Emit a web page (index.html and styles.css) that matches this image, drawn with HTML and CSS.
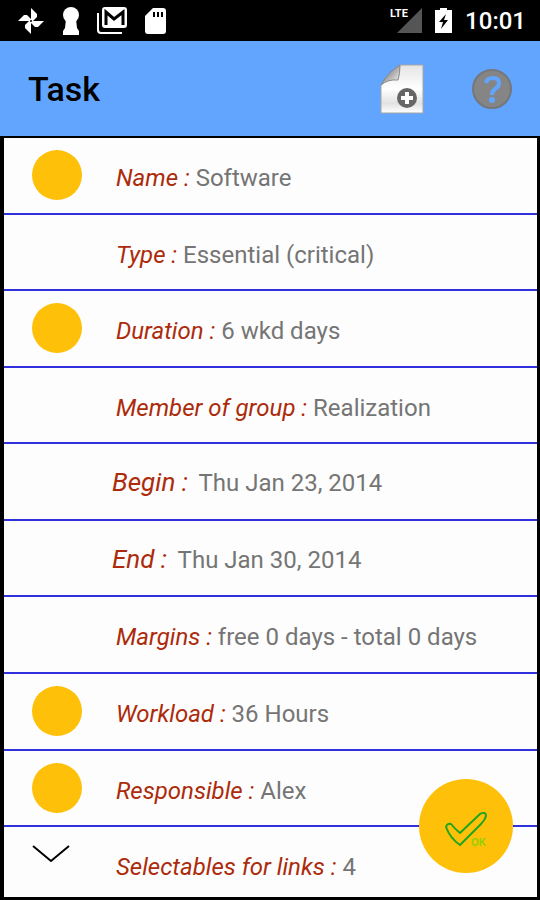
FILE: index.html
```html
<!DOCTYPE html>
<html lang="en">
<head>
   <meta charset="UTF-8">
   <meta name="viewport" content="width=device-width, initial-scale=1.0">
   <title>Task</title>
   <link rel="stylesheet" href="styles.css">
</head>
<body>
   <div class="statusbar">
      <div class="notifications">
         <svg width="28" height="28" viewBox="0 0 28 28" fill="#fff">
            <path d="M14 1 L20 7 V10 L16 14 H14 Z"/>
            <path d="M27 14 L21 20 H18 L14 16 V14 Z"/>
            <path d="M14 27 L8 21 V18 L12 14 H14 Z"/>
            <path d="M1 14 L7 8 H10 L14 12 V14 Z"/>
            <circle cx="14" cy="14" r="1" fill="#000"/>
         </svg>
         <svg width="16" height="28" viewBox="0 0 16 28" fill="#fff">
            <circle cx="8" cy="8" r="8"/>
            <path d="M3 12 H13 L14 21 L16 24 V28 H0 V24 L2 21 Z"/>
         </svg>
         <svg width="30" height="27" viewBox="0 0 30 27" fill="none" stroke="#fff" stroke-width="2">
            <path d="M1 6 V23 Q1 26 4 26 H25"/>
            <rect x="6" y="1" width="23" height="19" rx="2" fill="#fff"/>
            <path d="M9 18 V5 L17 12 L26 5 V18" stroke="#000" stroke-width="3"/>
         </svg>
         <svg width="21" height="26" viewBox="0 0 21 26">
            <path d="M8 0 H18 Q21 0 21 3 V23 Q21 26 18 26 H3 Q0 26 0 23 V8 Z" fill="#fff"/>
            <path d="M9 4 V9 M13 4 V9 M17 4 V9" stroke="#000" stroke-width="2"/>
         </svg>
      </div>
      <div class="system">
         <div class="signal">
            <svg width="25" height="25" viewBox="0 0 25 25"><path d="M25 0 V25 H0 Z" fill="#555"/></svg>
            <span class="lte">LTE</span>
         </div>
         <svg width="17" height="25" viewBox="0 0 17 25">
            <path d="M5 0 H12 V2 H17 V25 H0 V2 H5 Z" fill="#fff"/>
            <path d="M11 6 L4 14 H8 L6 21 L13 12 H9 Z" fill="#000"/>
         </svg>
         <span class="clock">10:01</span>
      </div>
   </div>

   <header>
      <h1>Task</h1>
      <button class="action" aria-label="New task">
         <svg width="44" height="50" viewBox="0 0 44 50">
            <defs>
               <linearGradient id="paper" x1="0" y1="0" x2="0" y2="1">
                  <stop offset="0" stop-color="#e4e4e4"/>
                  <stop offset="0.5" stop-color="#fff"/>
                  <stop offset="0.8" stop-color="#e2e2e2"/>
                  <stop offset="1" stop-color="#fff"/>
               </linearGradient>
               <linearGradient id="fold" x1="0" y1="0" x2="1" y2="1">
                  <stop offset="0.4" stop-color="#999"/>
                  <stop offset="1" stop-color="#fff"/>
               </linearGradient>
            </defs>
            <path d="M20 1 H43 V49 H1 V21 Z" fill="url(#paper)" stroke="#a5a5a5"/>
            <path d="M20 1 Q20 10 18 16 Q8 15 1 21 Q9 7 20 1 Z" fill="url(#fold)" stroke="#888"/>
            <circle cx="27" cy="34" r="10" fill="#666"/>
            <path d="M27 28 V40 M21 34 H33" stroke="#fff" stroke-width="4"/>
         </svg>
      </button>
      <button class="action" aria-label="Help">
         <svg width="40" height="40" viewBox="0 0 40 40">
            <circle cx="20" cy="20" r="19" fill="#858585" stroke="#74777c" stroke-width="2"/>
            <path d="M14 14 Q15 9 21 9 Q27 9 27 14 Q27 18 23 20 Q20 22 20 26" fill="none" stroke="#62a5ff" stroke-width="4"/>
            <circle cx="20" cy="31" r="3" fill="#62a5ff"/>
         </svg>
      </button>
   </header>

   <main>
      <ul class="fields">
         <li><button class="dot" aria-label="Edit name"></button><p><em>Name :</em> Software</p></li>
         <li><p><em>Type :</em> Essential (critical)</p></li>
         <li><button class="dot" aria-label="Edit duration"></button><p><em>Duration :</em> 6 wkd days</p></li>
         <li><p><em>Member of group :</em> Realization</p></li>
         <li class="date"><p><em>Begin :</em> Thu Jan 23, 2014</p></li>
         <li class="date"><p><em>End :</em> Thu Jan 30, 2014</p></li>
         <li><p><em>Margins :</em> free 0 days - total 0 days</p></li>
         <li><button class="dot" aria-label="Edit workload"></button><p><em>Workload :</em> 36 Hours</p></li>
         <li><button class="dot" aria-label="Edit responsible"></button><p><em>Responsible :</em> Alex</p></li>
         <li class="last">
            <button class="more" aria-label="Show more">
               <svg width="38" height="20" viewBox="0 0 38 20"><path d="M1 2 L19 17 L37 2" fill="none" stroke="#000" stroke-width="2"/></svg>
            </button>
            <p><em>Selectables for links :</em> 4</p>
         </li>
      </ul>
   </main>

   <button class="fab" aria-label="OK">
      <svg width="42" height="36" viewBox="0 0 42 36">
         <path d="M1 16 Q2 12 6 13 Q10 18 15 22 L35 3 Q41 0 41 5 Q40 9 36 13 L15 34 Q5 27 1 16 Z" fill="none" stroke="#1fa51f" stroke-width="2" stroke-linejoin="round"/>
      </svg>
      <span>OK</span>
   </button>
</body>
</html>
```

FILE: styles.css
```css
*{
   margin: 0;
   padding: 0;
   box-sizing: border-box;
}

body{
   display: flex;
   flex-direction: column;
   min-height: 100vh;
   background-color: #000;
   font-family: Roboto, "Liberation Sans", sans-serif;
}

button{
   border: none;
   background: none;
}

svg{
   display: block;
}

.statusbar{
   display: flex;
   justify-content: space-between;
   align-items: center;
   height: 41px;
   padding: 0 14px 0 17px;
   color: #fff;
}

.notifications{
   display: flex;
   align-items: center;
   gap: 18px;
}

.system{
   display: flex;
   align-items: center;
   gap: 13px;
}

.signal{
   position: relative;
}

.lte{
   position: absolute;
   top: -1px;
   left: -7px;
   font-size: 11px;
   line-height: 14px;
   font-weight: bold;
}

.clock{
   font-size: 24px;
   font-weight: 500;
}

header{
   display: flex;
   align-items: center;
   gap: 48px;
   height: 95px;
   padding: 0 28px;
   background-color: #62a5ff;
}

h1{
   flex: 1;
   font-size: 34px;
   font-weight: 500;
}

main{
   flex: 1;
   display: flex;
   border: 3px solid #000;
   border-width: 2px 3px 3px 4px;
}

.fields{
   flex: 1;
   display: flex;
   flex-direction: column;
   list-style: none;
   background-color: #fdfdfd;
}

.fields li{
   flex: 1;
   display: grid;
   grid-template-columns: 84px 1fr;
   border-bottom: 2px solid #3030dc;
   padding-left: 28px;
}

.fields .last{
   flex: 0 0 70px;
   border-bottom: none;
}

.fields p{
   grid-column: 2;
   grid-row: 1;
   padding-top: 24px;
   font-size: 24px;
   line-height: 32px;
   color: #757575;
}

.fields em{
   color: #ac2b0b;
}

.fields .date{
   grid-template-columns: 80px 1fr;
}

.date p{
   padding-top: 22px;
}

.date em{
   margin-right: 5px;
   font-size: 26px;
}

.dot{
   width: 50px;
   height: 50px;
   margin-top: 12px;
   border-radius: 50%;
   background-color: #ffc009;
}

.more{
   width: 38px;
   height: 20px;
   margin-top: 17px;
}

.fab{
   position: fixed;
   right: 27px;
   bottom: 27px;
   width: 94px;
   height: 94px;
   border-radius: 50%;
   background-color: #ffc009;
}

.fab svg{
   margin: 6px auto 0;
}

.fab span{
   position: absolute;
   right: 27px;
   bottom: 25px;
   font-size: 10px;
   font-weight: bold;
   color: #8fd000;
}
```
